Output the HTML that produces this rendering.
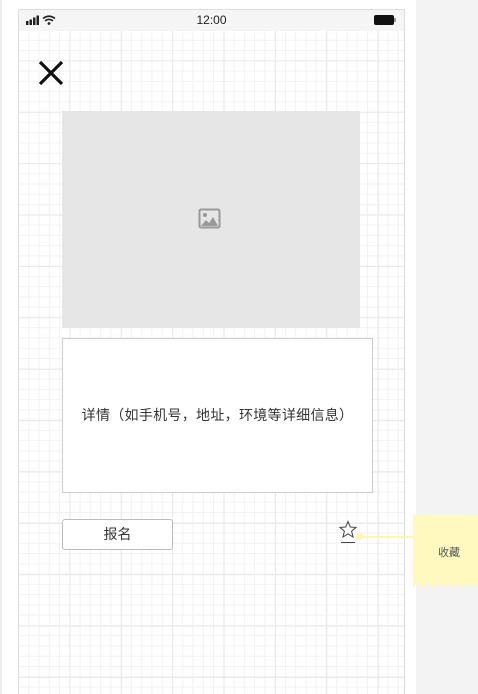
<!DOCTYPE html>
<html><head><meta charset="utf-8"><style>
*{margin:0;padding:0;box-sizing:border-box}
html,body{width:478px;height:694px;overflow:hidden}
body{position:relative;background:#fff;font-family:"Liberation Sans","Noto Sans CJK SC",sans-serif}
.rg{position:absolute;left:416px;top:0;width:62px;height:694px;background:#f3f3f3}
.lg{position:absolute;left:0;top:0;width:2px;height:694px;background:#eee}
.frame{position:absolute;left:18px;top:9px;width:387px;height:685px;border:1px solid #ddd;border-bottom:none;
background-color:#fff;
background-image:linear-gradient(#e8e8e8 1px,transparent 1px),linear-gradient(90deg,#e8e8e8 1px,transparent 1px),linear-gradient(#f2f2f2 1px,transparent 1px),linear-gradient(90deg,#f2f2f2 1px,transparent 1px);
background-size:51.4px 51.4px,51.4px 51.4px,10.28px 10.28px,10.28px 10.28px;background-position:-1px -1px}
.sb{position:absolute;left:0;top:0;width:100%;height:21px;background:#f5f5f5;font-size:12px;color:#222}
.box{position:absolute}
</style></head><body>
<div class="lg"></div><div class="rg"></div>
<div class="frame">
 <div class="sb">
  <svg style="position:absolute;left:7px;top:5px" width="36" height="11"><rect x="0" y="6" width="2.5" height="4" fill="#222"/><rect x="3.5" y="4.5" width="2.5" height="5.5" fill="#222"/><rect x="7" y="2.5" width="2.5" height="7.5" fill="#222"/><rect x="10.5" y="0.5" width="2.5" height="9.5" fill="#222"/>
  <path d="M17 3.5 Q23 -1 29 3.5" stroke="#222" stroke-width="1.6" fill="none"/><path d="M19 5.8 Q23 3 27 5.8" stroke="#222" stroke-width="1.6" fill="none"/><circle cx="23" cy="8.5" r="1.4" fill="#222"/></svg>
  <div style="position:absolute;left:0;width:100%;top:3px;text-align:center">12:00</div>
  <div style="position:absolute;left:355px;top:5px;width:20px;height:10px;border-radius:2px;background:#111"></div>
  <div style="position:absolute;left:375px;top:8px;width:2px;height:4px;background:#999"></div>
 </div>
 <svg style="position:absolute;left:19px;top:50px" width="26" height="26"><path d="M2 2 L24 24 M24 2 L2 24" stroke="#111" stroke-width="3.2"/></svg>
</div>
<div class="box" style="left:62px;top:111px;width:298px;height:217px;background:#e6e6e6"></div>
<svg class="box" style="left:198px;top:208px" width="24" height="22"><rect x="1.5" y="1.5" width="20" height="18" rx="1.5" fill="none" stroke="#999" stroke-width="2"/><circle cx="7" cy="7" r="2" fill="#999"/><path d="M3 18 L8 12 L11 15 L15 9 L20 18 Z" fill="#999"/></svg>
<div class="box" style="left:62px;top:338px;width:311px;height:155px;background:#fff;border:1px solid #ccc;font-size:14px;color:#333;line-height:153px;text-align:center;letter-spacing:0.3px">详情（如手机号，地址，环境等详细信息）</div>
<div class="box" style="left:62px;top:519px;width:111px;height:31px;background:#fff;border:1px solid #bbb;border-radius:3px;font-size:14px;color:#333;line-height:29px;text-align:center">报名</div>
<svg class="box" style="left:338px;top:520px" width="20" height="24"><path d="M10 1.5 L12.3 7 L18 7.4 L13.6 11.2 L15 17 L10 13.8 L5 17 L6.4 11.2 L2 7.4 L7.7 7 Z" fill="none" stroke="#444" stroke-width="1"/><path d="M3 22.5 H17" stroke="#444" stroke-width="1"/></svg>
<div class="box" style="left:358px;top:536px;width:56px;height:2px;background:#fff7b0"></div>
<div class="box" style="left:356px;top:533px;width:7px;height:7px;border-radius:50%;background:#fff7b0"></div>
<svg class="box" style="left:413px;top:515px" width="65" height="75"><path d="M0 0 H65 V68 L60 73 L55 68 L50 73 L45 68 L40 73 L35 68 L30 73 L25 68 L20 73 L15 68 L10 73 L5 68 L0 73 Z" fill="#fff9c0"/></svg>
<div class="box" style="left:438px;top:544px;font-size:11px;color:#555">收藏</div>
</body></html>
